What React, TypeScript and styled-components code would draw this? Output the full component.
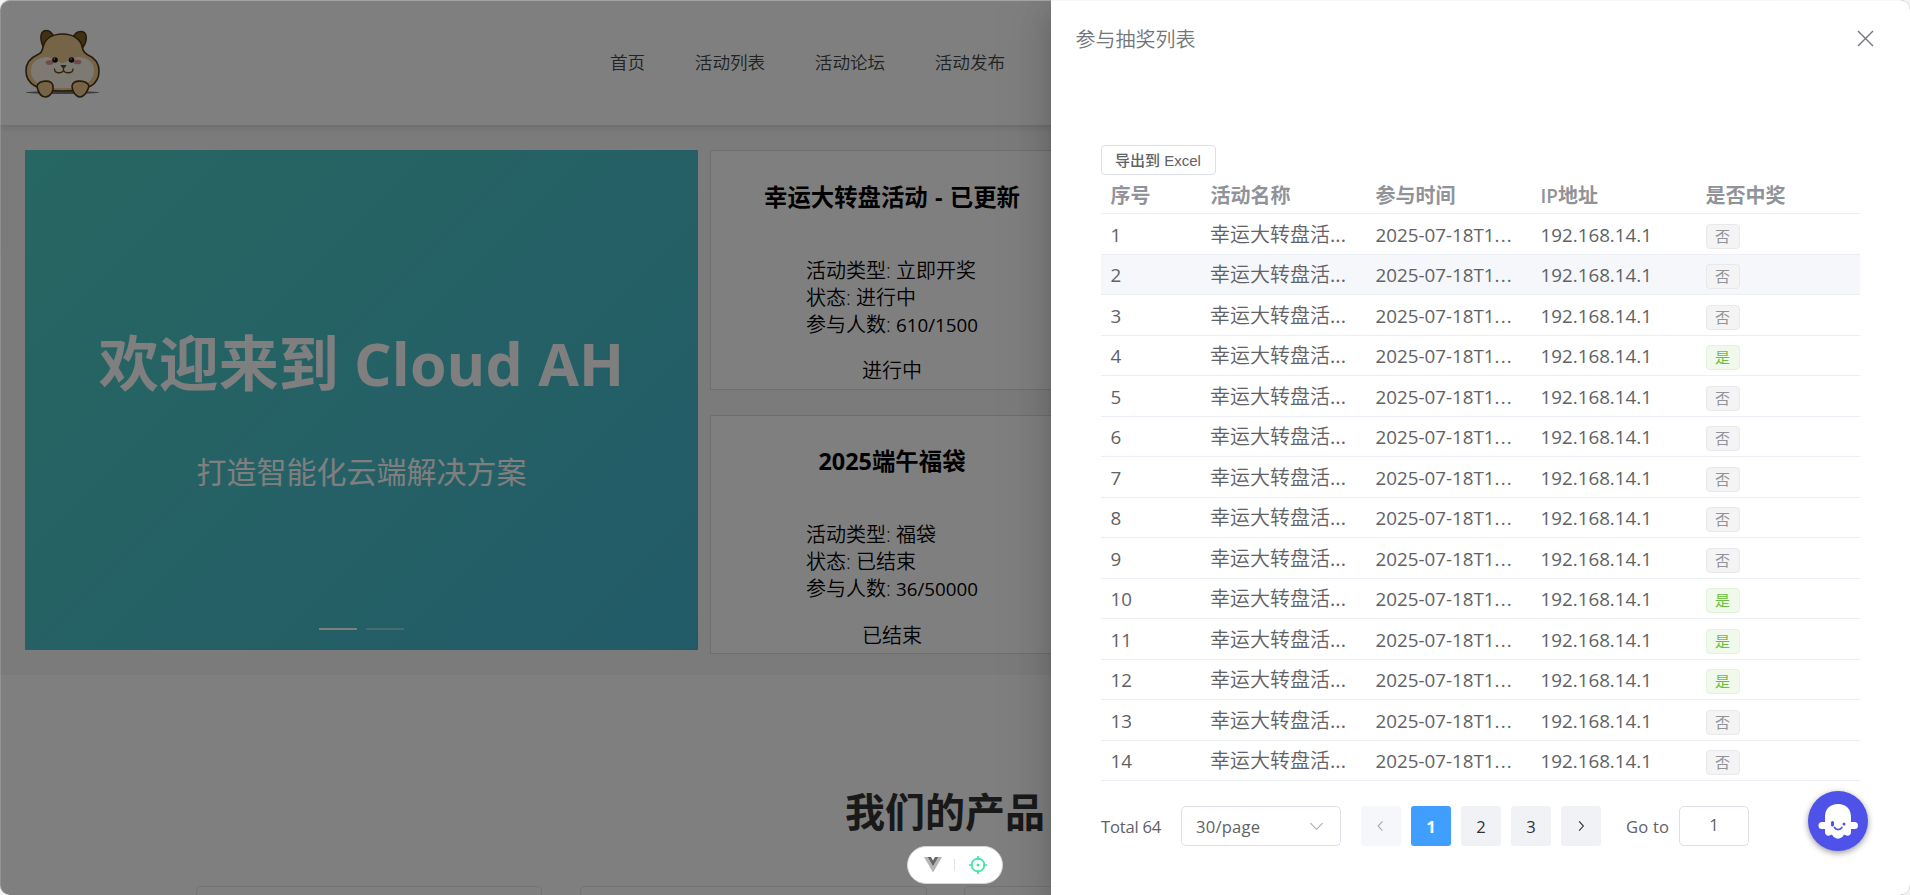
import React from "react";
import styled, { createGlobalStyle, css } from "styled-components";

const sans = '"Open Sans", "Noto Sans CJK SC", sans-serif';

const GlobalStyle = createGlobalStyle`
  * { box-sizing: border-box; }
  html, body { margin: 0; padding: 0; background: #f3f3f3; }
  body { font-family: ${sans}; overflow: hidden; }
`;

const Window = styled.div`
  position: relative;
  width: 1910px;
  height: 895px;
  overflow: hidden;
  border-radius: 10px;
  background: #fff;
`;

/* ---------- site behind the mask ---------- */

const Header = styled.header`
  position: relative;
  z-index: 1;
  display: flex;
  align-items: center;
  width: 100%;
  height: 125px;
  padding-left: 25px;
  background: #fff;
  box-shadow: 0 2px 8px rgba(0, 0, 0, 0.15);
`;

const Nav = styled.nav`
  display: flex;
  gap: 49.6px;
  margin: -2px 0 0 510px;
`;

const NavLink = styled.a`
  font-size: 17.6px;
  line-height: 26px;
  font-weight: 350;
  color: #444;
  white-space: nowrap;
`;

const Hero = styled.section`
  display: flex;
  gap: 12px;
  height: 550px;
  padding: 25px;
  background: #f7f7f7;
`;

const Carousel = styled.div`
  display: flex;
  flex-direction: column;
  align-items: center;
  width: 673px;
  height: 500px;
  padding-top: 168px;
  flex-shrink: 0;
  color: #fff;
  background: linear-gradient(135deg, #4ecdc4 0%, #45b7d1 100%);
`;

const HeroTitle = styled.h1`
  margin: 0;
  font-size: 60px;
  line-height: 90px;
  font-weight: 700;
  white-space: nowrap;
`;

const HeroLatin = styled.span`
  font-size: 59px;
  letter-spacing: 0.1px;
`;

const HeroText = styled.p`
  margin: 42px 0 0;
  font-size: 30px;
  line-height: 44px;
`;

const Indicators = styled.div`
  display: flex;
  gap: 9px;
  margin-top: 134px;
`;

const Indicator = styled.span<{ $active?: boolean }>`
  width: 38px;
  height: 2px;
  background: #fff;
  opacity: ${(p) => (p.$active ? 1 : 0.38)};
`;

const CardColumn = styled.div`
  display: flex;
  flex-direction: column;
  gap: 25px;
`;

const ActivityCard = styled.article`
  display: flex;
  flex-direction: column;
  align-items: center;
  width: 364px;
  height: 239.6px;
  flex-shrink: 0;
  border: 1px solid #ddd;
  background: #fff;
  color: #000;
  font-size: 20px;
  line-height: 27px;
  font-weight: 350;
`;

const CardTitle = styled.h3`
  margin: 28.5px 0 43px;
  font-size: 23.4px;
  line-height: 34px;
  font-weight: 700;
  word-spacing: 1.2px;
  white-space: nowrap;
`;

const CardFacts = styled.div`
  align-self: flex-start;
  margin-left: 95px;
  white-space: nowrap;
`;

const CardStatus = styled.div`
  margin-top: 18.5px;
`;

const Latin = styled.span`
  font-size: 18.8px;
  font-weight: 400;
`;

const Products = styled.section`
  display: flex;
  flex-direction: column;
  align-items: center;
  width: 1890px;
  padding-top: 107px;
`;

const ProductsTitle = styled.h2`
  margin: 0;
  font-size: 40px;
  line-height: 60px;
  font-weight: 700;
  color: #333;
`;

const ProductGrid = styled.div`
  display: grid;
  grid-template-columns: repeat(4, 1fr);
  gap: 37.5px;
  width: 1500px;
  margin: 44px 0 0 1px;
`;

const ProductCard = styled.div`
  height: 200px;
  border: 1px solid #e4e7ed;
  border-radius: 5px;
`;

const Mask = styled.div`
  position: absolute;
  z-index: 2;
  inset: 0;
  background: rgba(0, 0, 0, 0.5);
`;

/* ---------- drawer ---------- */

const Drawer = styled.aside`
  position: absolute;
  z-index: 3;
  top: 0;
  right: 0;
  width: 859px;
  height: 895px;
  padding: 0 50px;
  background: #fff;
  box-shadow: 0 16px 48px 16px rgba(0, 0, 0, 0.08),
    0 12px 32px rgba(0, 0, 0, 0.12), 0 8px 16px -8px rgba(0, 0, 0, 0.16);
`;

const DrawerHeader = styled.div`
  display: flex;
  align-items: center;
  justify-content: space-between;
  margin: 0 -15px 0 -25.5px;
  padding-top: 26px;
  height: 54px;
  font-size: 20px;
  line-height: 30px;
  font-weight: 350;
  color: #72767b;
`;

const CloseIcon = styled.svg`
  display: block;
  width: 17px;
  height: 17px;
  margin: -3px 1px 0 0;
`;

const ExportButton = styled.button`
  display: flex;
  align-items: center;
  justify-content: center;
  width: 115px;
  height: 30px;
  margin-top: 91px;
  padding: 0 1px 2px 0;
  border: 1px solid #dcdfe6;
  border-radius: 4px;
  background: #fff;
  font-family: "Liberation Sans", "Noto Sans CJK SC", sans-serif;
  font-size: 15px;
  font-weight: 500;
  color: #606266;
  white-space: nowrap;
`;

const rowGrid = css`
  display: grid;
  grid-template-columns: 100px 165px 165px 165px 164px;
  align-items: center;
`;

const TableHead = styled.div`
  ${rowGrid}
  height: 39px;
  border-bottom: 1px solid #ebeef5;
  font-size: 20px;
  line-height: 30px;
  font-weight: 700;
  color: #909399;
`;

const HeadCell = styled.div`
  padding: 3px 0 0 9.5px;
  white-space: nowrap;
`;

const HeadLatin = styled.span`
  font-size: 19px;
  font-weight: 600;
`;

const TableRow = styled.div<{ $hover?: boolean }>`
  ${rowGrid}
  height: 40.53px;
  border-bottom: 1px solid #ebeef5;
  background: ${(p) => (p.$hover ? "#f5f7fa" : "#fff")};
  color: #606266;
`;

const Cell = styled.div<{ $cjk?: boolean }>`
  padding: 2px 0 0 ${(p) => (p.$cjk ? 9 : 9.5)}px;
  font-size: ${(p) => (p.$cjk ? 20 : 18.8)}px;
  line-height: 28px;
  font-weight: ${(p) => (p.$cjk ? 350 : 400)};
  white-space: nowrap;
`;

const Dots = styled.span<{ $wide?: boolean }>`
  font-weight: 400;
  letter-spacing: ${(p) => (p.$wide ? 1.2 : 0.1)}px;
`;

const Tag = styled.span<{ $win: boolean }>`
  display: flex;
  align-items: center;
  justify-content: center;
  width: 34px;
  height: 25px;
  margin-top: 3px;
  border: 1px solid ${(p) => (p.$win ? "#e1f3d8" : "#e9e9eb")};
  border-radius: 4px;
  background: ${(p) => (p.$win ? "#f0f9eb" : "#f4f4f5")};
  color: ${(p) => (p.$win ? "#67c23a" : "#909399")};
  font-size: 15px;
  font-weight: 400;
  line-height: 15px;
`;

const Pagination = styled.div`
  display: flex;
  align-items: center;
  height: 40px;
  margin-top: 25px;
  font-size: 16.6px;
  color: #606266;
`;

const Total = styled.span`
  width: 80px;
  letter-spacing: -0.2px;
  white-space: nowrap;
`;

const PageSize = styled.div`
  display: flex;
  align-items: center;
  justify-content: space-between;
  width: 160px;
  height: 40px;
  margin-right: 20px;
  padding: 0 16px 0 14px;
  border: 1px solid #dcdfe6;
  border-radius: 5px;
  letter-spacing: 0.2px;
`;

const PageButton = styled.button<{ $active?: boolean; $disabled?: boolean }>`
  display: flex;
  align-items: center;
  justify-content: center;
  width: 40px;
  height: 40px;
  margin-right: 10px;
  padding: 0;
  border: 0;
  border-radius: 3px;
  font-family: ${sans};
  font-size: 16.6px;
  font-weight: ${(p) => (p.$active ? 700 : 400)};
  background: ${(p) => (p.$active ? "#409eff" : p.$disabled ? "#f5f7fa" : "#f0f2f5")};
  color: ${(p) => (p.$active ? "#fff" : p.$disabled ? "#a8abb2" : "#303133")};
`;

const GoTo = styled.span`
  width: 53px;
  margin-left: 15px;
  letter-spacing: 0.2px;
  white-space: nowrap;
`;

const PageInput = styled.div`
  width: 70px;
  height: 40px;
  border: 1px solid #dcdfe6;
  border-radius: 5px;
  line-height: 36px;
  text-align: center;
`;

/* ---------- floating widgets ---------- */

const DevPill = styled.div`
  position: absolute;
  z-index: 4;
  left: 907px;
  top: 846px;
  display: flex;
  align-items: center;
  width: 96px;
  height: 38px;
  padding: 0 15px 0 16px;
  justify-content: space-between;
  border-radius: 19px;
  background: #fff;
  border: 1px solid #d5d5d5;
`;

const PillDivider = styled.span`
  width: 1px;
  height: 12px;
  margin-left: -2px;
  background: #e3e3e3;
`;

const Assistant = styled.div`
  position: absolute;
  z-index: 4;
  left: 1808px;
  top: 791px;
  width: 60px;
  height: 60px;
  border-radius: 50%;
  background: #4e52e8;
  box-shadow: 0 2px 6px rgba(0, 0, 0, 0.4);
`;

const WindowEdge = styled.div`
  position: absolute;
  z-index: 5;
  inset: 0;
  border-radius: 10px;
  border-top: 1px solid rgba(235, 235, 235, 0.35);
  border-left: 1px solid rgba(255, 255, 255, 0.15);
  pointer-events: none;
`;

function HamsterLogo() {
  return (
    <svg width="75" height="70" viewBox="0 0 75 70" fill="none">
      <ellipse cx="37.5" cy="64.500" rx="37" ry="1.500" fill="#777" />
      <g stroke="#4d3410" strokeWidth="1.6">
        <path d="M18 18C14 9 16 2.500 21.500 2.500c4 0 6 3 7.500 7z" fill="#80602a" />
        <path d="M58 19c5-7 4-15-1.500-15.500C52 3 50 6 48 9z" fill="#80602a" />
        <path
          d="M37.500 6C27 6 20 11 18 19c-1 6-3 6-6 8C5 30 1 35 1 43c0 12 9 20 36.500 20S74 56 74 43c0-8-4-13-11-16-3-2-5-3-6-9C55 11 48 6 37.500 6z"
          fill="#ebc88e"
        />
      </g>
      <path
        d="M21 29C11 30 6 35 6 43c0 7 5 12 12 15 8 3 30 3 39 0 7-3 12-8 12-15 0-8-5-13-15-14-7 0-12 6-16.500 6S28 29 21 29z"
        fill="#f8f4e6"
      />
      <ellipse cx="24.500" cy="34.500" rx="3.800" ry="2.300" fill="#e89090" />
      <ellipse cx="52.500" cy="34" rx="3.800" ry="2.300" fill="#e89090" />
      <circle cx="30" cy="32" r="2.800" fill="#111" />
      <circle cx="46.500" cy="32" r="2.800" fill="#111" />
      <circle cx="29.400" cy="31" r=".7" fill="#ddd" />
      <circle cx="46" cy="31" r=".7" fill="#ddd" />
      <path d="M36 37.500h5L38.500 40.500z" fill="#6a451d" stroke="#6a451d" />
      <path
        d="M29.500 41c0 5 7.500 4.500 9 1.500 1.500 3 9.500 3.500 9.500-1.500M38.500 40v2.500"
        stroke="#6a451d"
        strokeWidth="1.300"
        strokeLinecap="round"
      />
      <g fill="#ebc88e" stroke="#4d3410" strokeWidth="1.600">
        <path d="M12 58c2-6 15-7 16 0 1 5-3 11-7.500 11S13 64 12 58z" />
        <path d="M64 58c-2-6-16-7-17 0 0 5 4 11 8 11s8-6 9-11z" />
      </g>
    </svg>
  );
}

function VueMark() {
  return (
    <svg width="18" height="16" viewBox="0 0 18 16">
      <path d="M0 0h3.600L9 9.300 14.400 0H18L9 15.600z" fill="#b5b5b5" />
      <path d="M3.600 0H7l2 3.400L11 0h3.400L9 9.300z" fill="#666" />
    </svg>
  );
}

function TargetIcon() {
  return (
    <svg width="18" height="18" viewBox="0 0 18 18" fill="none" stroke="#42e6a4" strokeWidth="1.700">
      <circle cx="9" cy="9" r="6.400" />
      <path d="M9 0v4M9 14v4M0 9h4M14 9h4" />
      <circle cx="9" cy="9" r="1.500" fill="#42e6a4" stroke="none" />
    </svg>
  );
}

function GhostFace() {
  return (
    <svg width="60" height="60" viewBox="0 0 60 60">
      <path
        d="M30 13c-8 0-13 5-13 13v5h-3a3.300 3.300 0 0 0 0 7h3v3c0 4 4 4.500 7 2.500 2 5.500 10 5.500 12 0 3 2 7 1.500 7-2.500v-3h3.500a3.300 3.300 0 0 0 0-7H43v-5c0-8-5-13-13-13z"
        fill="#fff"
      />
      <rect x="23" y="30" width="3" height="5.600" rx="1.500" fill="#4e52e8" />
      <circle cx="36" cy="33" r="1.500" fill="#4e52e8" />
      <path
        d="M26.500 36.500c1.500 2.700 5.500 2.700 7.500 0"
        fill="none"
        stroke="#4e52e8"
        strokeWidth="1.700"
        strokeLinecap="round"
      />
    </svg>
  );
}

function Chevron({ dir, color }: { dir: "left" | "right" | "down"; color: string }) {
  const d = {
    left: "M9 2.500 4.500 7.500l4.500 5",
    right: "M5.500 2.500 10 7.500l-4.500 5",
    down: "M1.500 4.500 8 11l6.500-6.500",
  }[dir];
  return (
    <svg width="15" height="15" viewBox="0 0 16 16" fill="none" stroke={color} strokeWidth="1.200">
      <path d={d} />
    </svg>
  );
}

const navItems = ["首页", "活动列表", "活动论坛", "活动发布"];

const activities = [
  { title: "幸运大转盘活动 - 已更新", type: "立即开奖", status: "进行中", count: "610/1500" },
  { title: "2025端午福袋", type: "福袋", status: "已结束", count: "36/50000" },
];

const winners = [4, 10, 11, 12];
const rows = Array.from({ length: 14 }, (_, i) => ({ id: i + 1, win: winners.includes(i + 1) }));

export default function App() {
  return (
    <>
      <GlobalStyle />
      <Window>
        <Header>
          <HamsterLogo />
          <Nav>
            {navItems.map((item) => (
              <NavLink key={item}>{item}</NavLink>
            ))}
          </Nav>
        </Header>
        <Hero>
          <Carousel>
            <HeroTitle>
              欢迎来到<HeroLatin> Cloud AH</HeroLatin>
            </HeroTitle>
            <HeroText>打造智能化云端解决方案</HeroText>
            <Indicators>
              <Indicator $active />
              <Indicator />
            </Indicators>
          </Carousel>
          <CardColumn>
            {activities.map((a) => (
              <ActivityCard key={a.title}>
                <CardTitle>{a.title}</CardTitle>
                <CardFacts>
                  <div>活动类型: {a.type}</div>
                  <div>状态: {a.status}</div>
                  <div>
                    参与人数: <Latin>{a.count}</Latin>
                  </div>
                </CardFacts>
                <CardStatus>{a.status}</CardStatus>
              </ActivityCard>
            ))}
          </CardColumn>
        </Hero>
        <Products>
          <ProductsTitle>我们的产品</ProductsTitle>
          <ProductGrid>
            <ProductCard />
            <ProductCard />
            <ProductCard />
            <ProductCard />
          </ProductGrid>
        </Products>

        <Mask />

        <Drawer>
          <DrawerHeader>
            <span>参与抽奖列表</span>
            <CloseIcon viewBox="0 0 17 17" fill="none" stroke="#72767b" strokeWidth="1.400">
              <path d="m1 1 15 15M16 1 1 16" />
            </CloseIcon>
          </DrawerHeader>
          <ExportButton>导出到 Excel</ExportButton>
          <TableHead>
            <HeadCell>序号</HeadCell>
            <HeadCell>活动名称</HeadCell>
            <HeadCell>参与时间</HeadCell>
            <HeadCell>
              <HeadLatin>IP</HeadLatin>地址
            </HeadCell>
            <HeadCell>是否中奖</HeadCell>
          </TableHead>
          {rows.map((r) => (
            <TableRow key={r.id} $hover={r.id === 2}>
              <Cell>{r.id}</Cell>
              <Cell $cjk>
                幸运大转盘活<Dots>...</Dots>
              </Cell>
              <Cell>
                2025-07-18T1<Dots $wide>...</Dots>
              </Cell>
              <Cell>192.168.14.1</Cell>
              <Cell>
                <Tag $win={r.win}>{r.win ? "是" : "否"}</Tag>
              </Cell>
            </TableRow>
          ))}
          <Pagination>
            <Total>Total 64</Total>
            <PageSize>
              30/page
              <Chevron dir="down" color="#a8abb2" />
            </PageSize>
            <PageButton $disabled>
              <Chevron dir="left" color="#a8abb2" />
            </PageButton>
            <PageButton $active>1</PageButton>
            <PageButton>2</PageButton>
            <PageButton>3</PageButton>
            <PageButton>
              <Chevron dir="right" color="#303133" />
            </PageButton>
            <GoTo>Go to</GoTo>
            <PageInput>1</PageInput>
          </Pagination>
        </Drawer>

        <DevPill>
          <VueMark />
          <PillDivider />
          <TargetIcon />
        </DevPill>
        <Assistant>
          <GhostFace />
        </Assistant>
        <WindowEdge />
      </Window>
    </>
  );
}
